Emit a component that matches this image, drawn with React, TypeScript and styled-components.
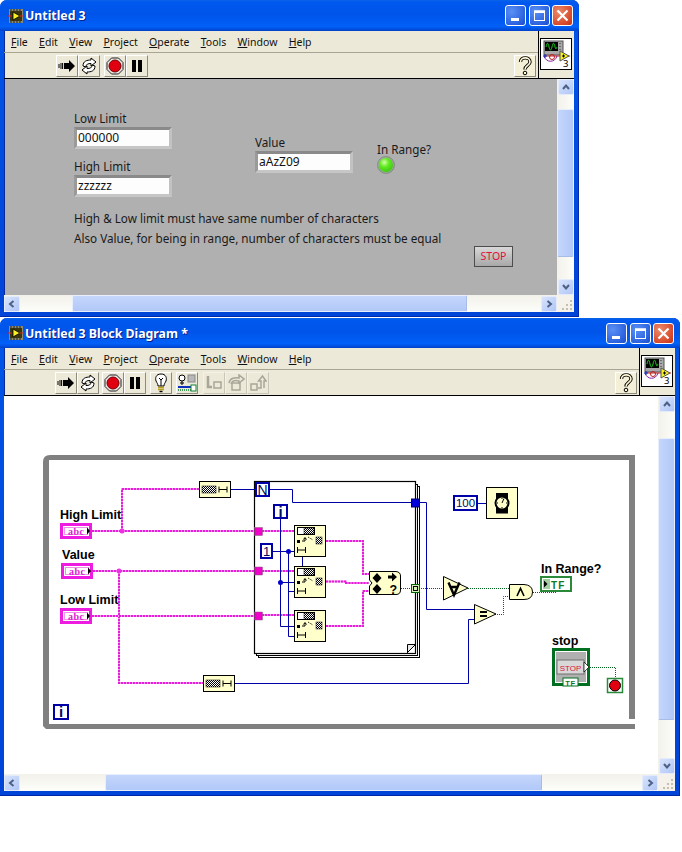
import React from "react";
import styled, { createGlobalStyle } from "styled-components";

const Global = createGlobalStyle`
  html, body { margin: 0; padding: 0; background: #fff; }
  #root { width: 682px; height: 852px; overflow: hidden; }
`;

const UI = `"Noto Sans", "Open Sans", sans-serif`;

const Page = styled.div`
  display: flex;
  flex-direction: column;
  align-items: flex-start;
  gap: 1px;
  font-family: ${UI};
`;

const Win = styled.div<{ $w: number; $h: number }>`
  width: ${(p) => p.$w}px;
  height: ${(p) => p.$h}px;
  box-sizing: border-box;
  display: flex;
  flex-direction: column;
  padding: 0 5px 5px 4px;
  border-radius: 7px 7px 0 0;
  background: linear-gradient(180deg, #0a5ae8 0, #0054e6 30px, #0044d8 100%);
  box-shadow: inset 0 -1px 0 #0028a8, inset -1px 0 0 #0028a8;
`;

const TitleBar = styled.div<{ $h: number }>`
  height: ${(p) => p.$h}px;
  flex: none;
  margin: 0 -5px 0 -4px;
  padding: 0 6px 0 8px;
  display: flex;
  align-items: center;
  gap: 1px;
  border-radius: 7px 7px 0 0;
  background: linear-gradient(180deg, #0a63ea 0%, #0058ee 8%, #0054e9 45%, #0060f8 85%, #0050e0 94%, #0040c8 100%);
`;

const TitleText = styled.span`
  flex: 1;
  color: #fff;
  font: bold 12.3px ${UI};
  text-shadow: 1px 1px 0 #0a1f8c;
`;

const Caption = styled.span<{ $close?: boolean }>`
  width: 21px;
  height: 21px;
  margin-left: 1.5px;
  box-sizing: border-box;
  border: 1px solid #fff;
  border-radius: 3px;
  display: flex;
  align-items: center;
  justify-content: center;
  background: ${(p) =>
    p.$close
      ? "radial-gradient(circle at 30% 30%, #ec8a6c, #d8492a 70%, #c03414)"
      : "radial-gradient(circle at 30% 30%, #5a90f4, #2c62de 70%, #1c4ccc)"};
`;

const Chrome = styled.div`
  display: flex;
  flex: none;
  background: #ece9d8;
  box-shadow: inset 1px 0 0 #0a2a9a;
  border-bottom: 1px solid #000;
`;

const Bars = styled.div`
  flex: 1;
  min-width: 0;
  display: flex;
  flex-direction: column;
`;

const MenuBar = styled.div`
  height: 21px;
  display: flex;
  align-items: center;
  gap: 11.3px;
  padding-left: 7px;
  font-size: 10.5px;
  color: #111;
  border-bottom: 1px solid #a8a594;
`;

const MenuItem = styled.span`
  u { text-underline-offset: 1px; }
`;

const Toolbar = styled.div<{ $pad: number }>`
  height: 25px;
  display: flex;
  align-items: center;
  padding: 0 2px 0 ${(p) => p.$pad}px;
`;

const Tool = styled.span<{ $gap?: number; $off?: boolean }>`
  width: 22px;
  height: 22px;
  flex: none;
  box-sizing: border-box;
  margin-left: ${(p) => p.$gap ?? 0}px;
  display: flex;
  align-items: center;
  justify-content: center;
  border: 1px solid;
  border-color: #fff #8c8a7c #8c8a7c #fff;
  background: #ece9d8;
  ${(p) => (p.$off ? "border-color:#f4f2e8 #c8c6b8 #c8c6b8 #f4f2e8;" : "")}
`;

const HelpTool = styled(Tool)`
  margin-left: auto;
  background: #f4f0d8;
`;

const IconPane = styled.div<{ $top: number }>`
  width: 36px;
  flex: none;
  box-sizing: border-box;
  border-left: 1px solid #000;
  padding: ${(p) => p.$top}px 0 0 1px;
`;

const ViIconBox = styled.div`
  width: 32px;
  height: 32px;
  box-sizing: border-box;
  background: #fff;
  border: 1px solid #000;
`;

const Body = styled.div`
  flex: 1;
  min-height: 0;
  display: grid;
  grid-template-columns: 1fr 17px;
  grid-template-rows: 1fr 17px;
`;

const Panel = styled.div`
  background: #b0b0b0;
  padding: 33px 0 0 70px;
  box-shadow: inset 1px 0 0 #0a2a9a;
  font-size: 11.7px;
  line-height: 14px;
  color: #1a1a1a;
  overflow: hidden;
`;

const ControlRow = styled.div`
  display: flex;
`;

const Column = styled.div<{ $w: number; $top?: number }>`
  width: ${(p) => p.$w}px;
  padding-top: ${(p) => p.$top ?? 0}px;
  display: flex;
  flex-direction: column;
`;

const FieldLabel = styled.div<{ $top?: number }>`
  height: 14px;
  line-height: 12px;
  margin-top: ${(p) => p.$top ?? 0}px;
`;

const Field = styled.div`
  width: 98px;
  height: 22px;
  margin-top: 1px;
  box-sizing: border-box;
  border: 3px solid;
  border-color: #8a8a8a #c2c2c2 #c6c6c6 #9a9a9a;
  background: #fdfdfd;
  padding-left: 1px;
  font-size: 12px;
  line-height: 15px;
  color: #111;
`;

const Led = styled.div`
  width: 18px;
  height: 18px;
  margin-top: -1px;
  border-radius: 50%;
  box-sizing: border-box;
  border: 1px solid #8c8c8c;
  box-shadow: inset 0 0 0 1px #a0a8a0;
  background: radial-gradient(circle at 40% 34%, #d4ffa8 0, #60ea20 32%, #38c010 78%);
`;

const Notes = styled.div`
  margin-top: 14px;
  display: flex;
  flex-direction: column;
  gap: 6px;
`;

const StopButton = styled.div`
  width: 39px;
  height: 21px;
  margin: 1px 0 0 400px;
  box-sizing: border-box;
  border: 1px solid #4c4c4c;
  background: linear-gradient(180deg, #d8d8d8, #a8a8a8);
  color: #e0103c;
  font-size: 10.5px;
  line-height: 19px;
  text-align: center;
`;

const DiagramArea = styled.div`
  background: #fff;
  overflow: hidden;
  svg { display: block; }
`;

const Track = styled.div<{ $v?: boolean }>`
  display: flex;
  flex-direction: ${(p) => (p.$v ? "column" : "row")};
  align-items: center;
  justify-content: space-between;
  background: ${(p) =>
    p.$v
      ? "linear-gradient(90deg,#f2f1ea,#fdfdfa)"
      : "linear-gradient(180deg,#f2f1ea,#fdfdfa)"};
`;

const ThumbSlot = styled.div<{ $v?: boolean }>`
  flex: 1;
  align-self: stretch;
  min-${(p) => (p.$v ? "height" : "width")}: 0;
  display: flex;
  flex-direction: ${(p) => (p.$v ? "column" : "row")};
`;

const Thumb = styled.div<{ $v?: boolean; $at: number; $len: number }>`
  flex: none;
  box-sizing: border-box;
  border: 1px solid #e8eefc;
  border-${(p) => (p.$v ? "bottom" : "right")}-color: #a8bce8;
  border-radius: 2px;
  background: ${(p) =>
    p.$v
      ? "linear-gradient(90deg,#c4d6fb,#b2c8f8)"
      : "linear-gradient(180deg,#c4d6fb,#b2c8f8)"};
  ${(p) =>
    p.$v
      ? `margin-top:${p.$at}px;height:${p.$len}px;width:100%;`
      : `margin-left:${p.$at}px;width:${p.$len}px;height:100%;`}
`;

const ScrollBtn = styled.span`
  width: 16px;
  height: 16px;
  flex: none;
  box-sizing: border-box;
  border: 1px solid #e4ebfb;
  border-radius: 2px;
  display: flex;
  align-items: center;
  justify-content: center;
  background: linear-gradient(135deg, #d8e4fd, #b0c6f6);
`;

const Grip = styled.div`
  background: #f4f2ea;
  display: flex;
  align-items: flex-end;
  justify-content: flex-end;
`;

const Chevron = ({ dir }: { dir: "u" | "d" | "l" | "r" }) => {
  const d = {
    u: "M2 7 L5 3.5 L8 7",
    d: "M2 3 L5 6.5 L8 3",
    l: "M6.5 2 L3 5 L6.5 8",
    r: "M3.5 2 L7 5 L3.5 8",
  }[dir];
  return (
    <svg width="10" height="10" viewBox="0 0 10 10">
      <path d={d} fill="none" stroke="#4d6185" strokeWidth="2" />
    </svg>
  );
};

const VScroll = ({ at, len }: { at: number; len: number }) => (
  <Track $v>
    <ScrollBtn><Chevron dir="u" /></ScrollBtn>
    <ThumbSlot $v><Thumb $v $at={at} $len={len} /></ThumbSlot>
    <ScrollBtn><Chevron dir="d" /></ScrollBtn>
  </Track>
);

const HScroll = ({ at, len }: { at: number; len: number }) => (
  <Track>
    <ScrollBtn><Chevron dir="l" /></ScrollBtn>
    <ThumbSlot><Thumb $at={at} $len={len} /></ThumbSlot>
    <ScrollBtn><Chevron dir="r" /></ScrollBtn>
  </Track>
);

const GripDots = () => (
  <svg width="14" height="14" viewBox="0 0 14 14">
    {[
      [10, 2],
      [6, 6],
      [10, 6],
      [2, 10],
      [6, 10],
      [10, 10],
    ].map(([x, y]) => (
      <rect key={`${x}-${y}`} x={x} y={y} width="2" height="2" fill="#c4c0ac" />
    ))}
  </svg>
);

const LvIcon = () => (
  <svg width="16" height="16" viewBox="0 0 16 16">
    <rect x="1" y="1" width="14" height="14" fill="#8a8a70" />
    <rect x="2" y="3" width="12" height="10" fill="#3a3410" />
    <path d="M5 4 L12 8 L5 12 Z" fill="#f8f020" stroke="#000" strokeWidth="0.8" />
    <path d="M0 8 H4 M11 8 H16" stroke="#e02020" strokeWidth="1.2" />
    <path d="M3 1 V3 M6 1 V3 M9 1 V3 M12 1 V3 M3 13 V15 M6 13 V15 M9 13 V15 M12 13 V15" stroke="#222" />
  </svg>
);

const MinGlyph = () => (
  <svg width="13" height="13" viewBox="0 0 13 13"><rect x="2" y="9" width="8" height="3" fill="#fff" /></svg>
);
const MaxGlyph = () => (
  <svg width="13" height="13" viewBox="0 0 13 13">
    <rect x="1.5" y="2" width="10" height="9.5" fill="none" stroke="#fff" />
    <rect x="1" y="1.5" width="11" height="2.5" fill="#fff" />
  </svg>
);
const CloseGlyph = () => (
  <svg width="13" height="13" viewBox="0 0 13 13">
    <path d="M1.5 1.5 L11.5 11.5 M11.5 1.5 L1.5 11.5" stroke="#fff" strokeWidth="2.2" />
  </svg>
);

const RunIcon = () => (
  <svg width="18" height="14" viewBox="0 0 18 14">
    <path d="M6 4 H11 V1 L17 7 L11 13 V10 H6 Z" fill="#000" />
    <path d="M1 5 V9 M3 4 V10 M4.6 4 V10" stroke="#000" />
  </svg>
);
const ContIcon = () => (
  <svg width="18" height="18" viewBox="0 0 18 18">
    <path d="M3 9 C3 4 7 3 11 3 V1 L16 5 L11 9 V6.5 C8 6.5 6 7 6 10 Z" fill="#fff" stroke="#000" />
    <path d="M15 9 C15 14 11 15 7 15 V17 L2 13 L7 9 V11.5 C10 11.5 12 11 12 8 Z" fill="#fff" stroke="#000" />
  </svg>
);
const AbortIcon = () => (
  <svg width="18" height="18" viewBox="0 0 18 18">
    <path d="M5.5 1 H12.5 L17 5.5 V12.5 L12.5 17 H5.5 L1 12.5 V5.5 Z" fill="#e8e8e8" stroke="#222" />
    <circle cx="9" cy="9" r="6" fill="#e00010" stroke="#700" />
  </svg>
);
const PauseIcon = () => (
  <svg width="14" height="14" viewBox="0 0 14 14">
    <rect x="2" y="1" width="4" height="12" /><rect x="8" y="1" width="4" height="12" />
  </svg>
);
const BulbIcon = () => (
  <svg width="16" height="20" viewBox="0 0 16 20">
    <path d="M8 1 C3 1 2 5 3 8 C4 10 5 11 5 13 H11 C11 11 12 10 13 8 C14 5 13 1 8 1 Z" fill="#fff" stroke="#000" />
    <path d="M8 13 V7 M6 5 L8 7 L10 5" fill="none" stroke="#000" />
    <path d="M5 14.5 H11 M5 16.5 H11" stroke="#b8a020" strokeWidth="1.5" />
    <path d="M6.5 18.5 H9.5" stroke="#000" strokeWidth="1.5" />
  </svg>
);
const RetainIcon = () => (
  <svg width="20" height="18" viewBox="0 0 20 18">
    <circle cx="5" cy="4" r="3" fill="#fff" stroke="#000" />
    <path d="M5 7 V11 M3 9 H7" stroke="#000" />
    <rect x="11" y="1" width="7" height="7" fill="#b8b8b8" stroke="#888" />
    <path d="M1 13 H14" stroke="#1030c0" strokeWidth="2" />
    <path d="M1 16 H14" stroke="#108030" strokeWidth="1.5" strokeDasharray="1 1" />
    <rect x="14" y="11" width="5" height="6" fill="#fff" stroke="#108030" />
  </svg>
);
const StepIcon = ({ kind }: { kind: 0 | 1 | 2 }) => (
  <svg width="18" height="18" viewBox="0 0 18 18" fill="none" stroke="#a8a698" strokeWidth="1.5">
    {kind === 0 && (
      <>
        <path d="M3 2 V13 H7" strokeWidth="2.5" />
        <rect x="9" y="8" width="7" height="6" />
      </>
    )}
    {kind === 1 && (
      <>
        <rect x="5" y="9" width="8" height="7" />
        <path d="M2 9 C3 4 8 3 12 4 V1 L17 5 L12 9 V7 C8 6 5 7 4 10" />
      </>
    )}
    {kind === 2 && (
      <>
        <rect x="2" y="10" width="6" height="6" />
        <path d="M9 14 H12 V7 H9.5 L13.5 2 L17 7 H15 V14" />
      </>
    )}
  </svg>
);
const HelpIcon = () => (
  <svg width="16" height="20" viewBox="0 0 16 20" fill="none">
    <path d="M3.5 6 C3.5 0.5 13 0.5 13 6 C13 9.5 8 9.5 8 13.5" stroke="#000" strokeWidth="3.4" />
    <path d="M3.5 6 C3.5 0.5 13 0.5 13 6 C13 9.5 8 9.5 8 13.5" stroke="#fff8d8" strokeWidth="1.6" />
    <circle cx="8" cy="17" r="1.8" fill="#fff8d8" stroke="#000" />
  </svg>
);

const ViIcon = () => (
  <ViIconBox>
    <svg width="30" height="30" viewBox="0 0 30 30">
      <rect x="3" y="2" width="19" height="14" fill="#a8a8a8" stroke="#555" />
      <rect x="4" y="3" width="13" height="9" fill="#000" />
      <path d="M5 8 C6 3 7 3 8 8 C9 12 10 12 11 8 C12 3 13 3 14 8 C15 11 15 10 16 8" fill="none" stroke="#18d018" />
      <path d="M19 4 V5 M19 7 V8 M19 10 V11" stroke="#333" />
      <path d="M3 17 H29" stroke="#c02020" />
      <path d="M3 17 C5 24 14 24 16 17" fill="none" stroke="#8020a0" />
      <circle cx="11" cy="18" r="2.5" fill="none" stroke="#c02020" />
      <path d="M2 17 H6 M4 15 V19" stroke="#1030c0" />
      <path d="M19 12 L28 17 L19 22 Z" fill="#f4f020" stroke="#555" />
      <path d="M21 17 H24 M22.5 15.5 V18.5" stroke="#000" />
      <text x="22" y="27.5" fontFamily={UI} fontSize="9.5" fill="#000">3</text>
    </svg>
  </ViIconBox>
);

/* ---------- block diagram drawing ---------- */

const StrWire = ({ d }: { d: string }) => (
  <g fill="none" strokeWidth="2">
    <path d={d} stroke="#f49cec" />
    <path d={d} stroke="#e81cdc" strokeDasharray="2 1" />
  </g>
);

const W = {
  num: { stroke: "#0000a8", strokeWidth: 1, fill: "none" },
  bool: { stroke: "#00641e", strokeWidth: 1, strokeDasharray: "1 1", fill: "none" },
};

const NODE = "#ffffcc";
const BOLD = `"Liberation Sans", sans-serif`;

const Hatch = ({ x, y, w, h }: { x: number; y: number; w: number; h: number }) => (
  <rect x={x} y={y} width={w} height={h} fill="url(#checker)" stroke="#000" strokeWidth="0.5" />
);

const LenGlyph = ({ x, y }: { x: number; y: number }) => (
  <path d={`M${x} ${y - 3} v6 M${x} ${y} h8 M${x + 8} ${y - 3} v6`} stroke="#000" fill="none" />
);

const StrLen = ({ x, y }: { x: number; y: number }) => (
  <g>
    <rect x={x + 0.5} y={y + 0.5} width="31" height="16" fill={NODE} stroke="#000" />
    <Hatch x={x + 3} y={y + 5} w={14} h={7} />
    <LenGlyph x={x + 20} y={y + 8.5} />
  </g>
);

const Search = ({ x, y }: { x: number; y: number }) => (
  <g>
    <rect x={x + 0.5} y={y + 0.5} width="31" height="31" fill={NODE} stroke="#000" />
    <rect x={x + 3.5} y={y + 2.5} width="17" height="7" fill="#fff" stroke="#000" />
    <Hatch x={x + 10} y={y + 3} w={10} h={6} />
    <rect x={x + 3} y={y + 15} width="3" height="3" fill="#000" />
    <path d={`M${x + 8} ${y + 16} h3 m0 0 v-3 m-1.5 1.5 l1.5 -2 l1.5 2`} stroke="#000" fill="none" />
    <path d={`M${x + 14} ${y + 12} l5 3`} stroke="#000" strokeDasharray="1 1" fill="none" />
    <Hatch x={x + 22} y={y + 12} w={6} h={7} />
    <LenGlyph x={x + 3.5} y={y + 25} />
  </g>
);

const Tri = ({ x, y, w, h }: { x: number; y: number; w: number; h: number }) => (
  <path d={`M${x + 0.5} ${y + 0.5} L${x + w} ${y + h / 2} L${x + 0.5} ${y + h} Z`} fill={NODE} stroke="#000" />
);

const Constant = ({ x, y, w, h, t, size = 13, bold }: { x: number; y: number; w: number; h: number; t: string; size?: number; bold?: boolean }) => (
  <g>
    <rect x={x + 1} y={y + 1} width={w - 2} height={h - 2} fill="#fff" stroke="#0000a8" strokeWidth="2" />
    <text x={x + w / 2} y={y + h / 2 + size * 0.36} textAnchor="middle" fontFamily={BOLD} fontWeight={bold ? "bold" : "normal"} fontSize={size} fill="#000c60">{t}</text>
  </g>
);

const StrTerm = ({ x, y }: { x: number; y: number }) => (
  <g>
    <rect x={x + 1.5} y={y + 1.5} width="29" height="13" fill="#fff" stroke="#ee1ce0" strokeWidth="3" />
    <rect x={x + 4.5} y={y + 4.5} width="23" height="7" fill="#fff" stroke="#f090e8" />
    <text x={x + 8} y={y + 11.5} fontFamily={`"Liberation Serif", serif`} fontWeight="bold" fontSize="10" fill="#e020d0" letterSpacing="0.5">abc</text>
    <path d={`M${x + 27} ${y + 4.5} l3 3.5 l-3 3.5 Z`} fill="#000" />
  </g>
);

const Label = ({ x, y, t }: { x: number; y: number; t: string }) => (
  <text x={x} y={y} fontFamily={BOLD} fontWeight="bold" fontSize="12.5" fill="#000">{t}</text>
);

const Tunnel = ({ y }: { y: number }) => (
  <rect x="254.5" y={y} width="8" height="8" fill="#f000c8" stroke="#806080" strokeWidth="0.5" />
);

const Dot = ({ x, y, c }: { x: number; y: number; c: string }) => <circle cx={x} cy={y} r="2.5" fill={c} />;

const Diagram = () => (
  <svg width="653" height="380" viewBox="4 395 653 380">
    <defs>
      <pattern id="checker" width="2" height="2" patternUnits="userSpaceOnUse">
        <rect width="2" height="2" fill="#fff" />
        <rect width="1" height="1" fill="#000" />
        <rect x="1" y="1" width="1" height="1" fill="#000" />
      </pattern>
    </defs>

    {/* while loop */}
    <path
      d="M43 723 V461 Q43 454 50 454 H635 V718 H629 V459 H49 V723 H629 L635 723 V728 H46 L43 725 Z"
      fill="#808080"
      fillRule="evenodd"
    />

    {/* for loop */}
    <rect x="258.5" y="485.5" width="161" height="171" fill="#fff" stroke="#000" />
    <rect x="256.5" y="483.5" width="161" height="171" fill="#fff" stroke="#000" />
    <rect x="254.5" y="480.5" width="161" height="172" fill="#fff" stroke="#000" strokeWidth="1.2" />
    <path d="M407.5 651 V644 H415 Z" fill="#e8e8e8" />
    <path d="M407 652 L416 643 M407.5 652 V643.5 H416" fill="none" stroke="#000" />

    {/* string wires */}
    <StrWire d="M92 530 H254 M122 530 V488 H199" />
    <StrWire d="M93 570 H254 M119 570 V682 H203" />
    <StrWire d="M92 615 H254" />
    <StrWire d="M262 530 H294 M262 570 H294 M262 614 H294" />
    <StrWire d="M326 540 H363 V573 H369" />
    <StrWire d="M326 580.5 H346 V582 H369" />
    <StrWire d="M326 625 H363 V590 H369" />
    <Dot x={122} y={530} c="#ee30e4" />
    <Dot x={119} y={570} c="#ee30e4" />

    {/* numeric wires */}
    <path {...W.num} d="M231 488.5 H255" />
    <path {...W.num} d="M270 488.5 H292.5 V501.5 H412" />
    <path {...W.num} d="M419 501.5 H426.5 V608.5 H474" />
    <path {...W.num} d="M280.5 517 V625.5 H294 M280.5 581.5 H294" />
    <path {...W.num} d="M272 550.5 H294 M288.5 550.5 V635.5 H294 M302.5 555 V565 M288.5 590.5 H294" />
    <path {...W.num} d="M235 682.5 H468.5 V618.5 H474" />
    <path {...W.num} d="M477 502.5 H486" />
    <Dot x={288.5} y={550.5} c="#0000c8" />
    <Dot x={280.5} y={581.5} c="#0000c8" />

    {/* boolean wires */}
    <path {...W.bool} d="M401 587.5 H411 M419 587.5 H443 M468 587.5 H509" />
    <path {...W.bool} d="M495 613.5 H503.5 V595.5 H509" />
    <path {...W.bool} d="M533 591.5 H556" />
    <path {...W.bool} d="M586 666.5 H615.5 V677" />

    {/* top string length nodes */}
    <StrLen x={199} y={480} />
    <StrLen x={203} y={674} />

    {/* terminals */}
    <Label x={60} y={518} t="High Limit" />
    <StrTerm x={60} y={522} />
    <Label x={62} y={558} t="Value" />
    <StrTerm x={61} y={562} />
    <Label x={60} y={603} t="Low Limit" />
    <StrTerm x={60} y={607} />

    <Tunnel y={526.5} />
    <Tunnel y={566} />
    <Tunnel y={611} />

    <Constant x={255} y={481} w={15} h={15} t="N" size={14} />
    <Constant x={273} y={503} w={15} h={15} t="i" size={15} bold />
    <Constant x={260} y={542} w={13} h={16} t="1" />
    <Constant x={53} y={703} w={16} h={16} t="i" size={15} bold />

    <rect x="411.5" y="498" width="8" height="8" fill="#0000d8" stroke="#000060" />
    <rect x="411.5" y="583.5" width="8" height="8" fill="#d8f0b0" stroke="#006400" />
    <rect x="413.5" y="585.5" width="4" height="4" fill="none" stroke="#000" />

    <Search x={294} y={524} />
    <Search x={294} y={565} />
    <Search x={294} y={609} />

    {/* combine node */}
    <path d="M369.5 570.5 H396 Q400.5 571 400.5 575 V589 Q400.5 593.5 396 593.5 H369.5 V585 L372 582 L369.5 579 Z" fill={NODE} stroke="#000" />
    <path d="M377 572 l4.5 5 l-4.5 5 l-4.5 -5 Z M377 583 l4.5 5 l-4.5 5 l-4.5 -5 Z" fill="#000" />
    <path d="M388 574.5 h4 v-3 l5 4.5 l-5 4.5 v-3 h-4 Z" fill="#000" />
    <text x="389.5" y="592.5" fontFamily={BOLD} fontWeight="bold" fontSize="12.5" fill="#000">?</text>

    {/* watch */}
    <Constant x={453} y={494} w={25} h={16} t="100" size={11.5} />
    <rect x="486.5" y="486.5" width="31" height="31" fill={NODE} stroke="#000" />
    <rect x="496" y="492" width="12" height="6" fill="#000" />
    <rect x="496" y="506" width="12" height="6.5" fill="#000" />
    <circle cx="502" cy="502" r="6.5" fill={NODE} stroke="#000" strokeWidth="2" />
    <path d="M502 502 L504 497.5 M502 497 V498 M502 506 V507 M497 502 H498 M506 502 H507" stroke="#000" />

    {/* logic */}
    <Tri x={443} y={575} w={25} h={24} />
    <path d="M448.5 581.5 L454 594 L459.5 581.5 M450 586 H458" fill="none" stroke="#000" strokeWidth="2.4" />
    <Tri x={474} y={603} w={22} h={20} />
    <path d="M480 611 H487 M480 615 H487" stroke="#000" strokeWidth="2" />
    <path d="M509.5 583.5 H524 Q532.5 584 532.5 591 Q532.5 598.5 524 598.5 H509.5 Z" fill={NODE} stroke="#000" />
    <path d="M517 595 L520.5 587.5 L524 595" fill="none" stroke="#000" strokeWidth="1.6" />

    {/* In Range? */}
    <Label x={541} y={571.5} t="In Range?" />
    <rect x="541" y="576" width="30" height="14" fill="#fff" stroke="#2a8a3a" strokeWidth="2" />
    <rect x="543" y="578" width="7" height="10" fill="#a0d0a0" />
    <path d="M544 579.5 l3.5 3.5 l-3.5 3.5 Z" fill="#000" />
    <text x="551" y="587.5" fontFamily={BOLD} fontWeight="bold" fontSize="10" fill="#107820" letterSpacing="1.2">TF</text>

    {/* stop */}
    <Label x={552} y={644} t="stop" />
    <rect x="553.5" y="648.5" width="35" height="35" fill="#b0b0b0" stroke="#007020" strokeWidth="3" />
    <rect x="555.5" y="650.5" width="31" height="31" fill="none" stroke="#fff" />
    <rect x="557" y="659" width="27" height="14" fill="#d8d8d8" stroke="#707070" />
    <text x="570.5" y="669.5" textAnchor="middle" fontFamily={BOLD} fontSize="8" fill="#e0103c">STOP</text>
    <rect x="563" y="677" width="15" height="8" fill="#fff" stroke="#007020" />
    <text x="570.5" y="684.5" textAnchor="middle" fontFamily={BOLD} fontWeight="bold" fontSize="7.5" fill="#107820" letterSpacing="0.6">TF</text>
    <path d="M584 661 L589 666 L584 671 Z" fill="#fff" stroke="#000" strokeWidth="0.7" />
    <rect x="607.5" y="677.5" width="15" height="14" fill="#fff" stroke="#2a8a3a" strokeWidth="1.5" />
    <circle cx="615" cy="684.5" r="5.5" fill="#e00010" stroke="#000" />
  </svg>
);

/* ---------- windows ---------- */

const MENU = ["File", "Edit", "View", "Project", "Operate", "Tools", "Window", "Help"];

const Menu = () => (
  <MenuBar>
    {MENU.map((m) => (
      <MenuItem key={m}>
        <u>{m[0]}</u>
        {m.slice(1)}
      </MenuItem>
    ))}
  </MenuBar>
);

const Head = ({ title, h }: { title: string; h: number }) => (
  <TitleBar $h={h}>
    <LvIcon />
    <TitleText>{title}</TitleText>
    <Caption><MinGlyph /></Caption>
    <Caption><MaxGlyph /></Caption>
    <Caption $close><CloseGlyph /></Caption>
  </TitleBar>
);

export default function App() {
  return (
    <>
      <Global />
      <Page>
        <Win $w={579} $h={317}>
          <Head title="Untitled 3" h={31} />
          <Chrome>
            <Bars>
              <Menu />
              <Toolbar $pad={52}>
                <Tool><RunIcon /></Tool>
                <Tool><ContIcon /></Tool>
                <Tool $gap={4}><AbortIcon /></Tool>
                <Tool><PauseIcon /></Tool>
                <HelpTool><HelpIcon /></HelpTool>
              </Toolbar>
            </Bars>
            <IconPane $top={7}><ViIcon /></IconPane>
          </Chrome>
          <Body>
            <Panel>
              <ControlRow>
                <Column $w={181}>
                  <FieldLabel>Low Limit</FieldLabel>
                  <Field>000000</Field>
                  <FieldLabel $top={11}>High Limit</FieldLabel>
                  <Field>zzzzzz</Field>
                </Column>
                <Column $w={122} $top={24}>
                  <FieldLabel>Value</FieldLabel>
                  <Field>aAzZ09</Field>
                </Column>
                <Column $w={70} $top={31}>
                  <FieldLabel>In Range?</FieldLabel>
                  <Led />
                </Column>
              </ControlRow>
              <Notes>
                <div>High &amp; Low limit must have same number of characters</div>
                <div>Also Value, for being in range, number of characters must be equal</div>
              </Notes>
              <StopButton>STOP</StopButton>
            </Panel>
            <VScroll at={14} len={148} />
            <HScroll at={52} len={395} />
            <Grip><GripDots /></Grip>
          </Body>
        </Win>

        <Win $w={680} $h={478}>
          <Head title="Untitled 3 Block Diagram *" h={30} />
          <Chrome>
            <Bars>
              <Menu />
              <Toolbar $pad={51}>
                <Tool><RunIcon /></Tool>
                <Tool><ContIcon /></Tool>
                <Tool $gap={3}><AbortIcon /></Tool>
                <Tool><PauseIcon /></Tool>
                <Tool $gap={4}><BulbIcon /></Tool>
                <Tool $gap={4}><RetainIcon /></Tool>
                <Tool $gap={5} $off><StepIcon kind={0} /></Tool>
                <Tool $off><StepIcon kind={1} /></Tool>
                <Tool $off><StepIcon kind={2} /></Tool>
                <HelpTool><HelpIcon /></HelpTool>
              </Toolbar>
            </Bars>
            <IconPane $top={7}><ViIcon /></IconPane>
          </Chrome>
          <Body>
            <DiagramArea><Diagram /></DiagramArea>
            <VScroll at={26} len={282} />
            <HScroll at={85} len={437} />
            <Grip><GripDots /></Grip>
          </Body>
        </Win>
      </Page>
    </>
  );
}
